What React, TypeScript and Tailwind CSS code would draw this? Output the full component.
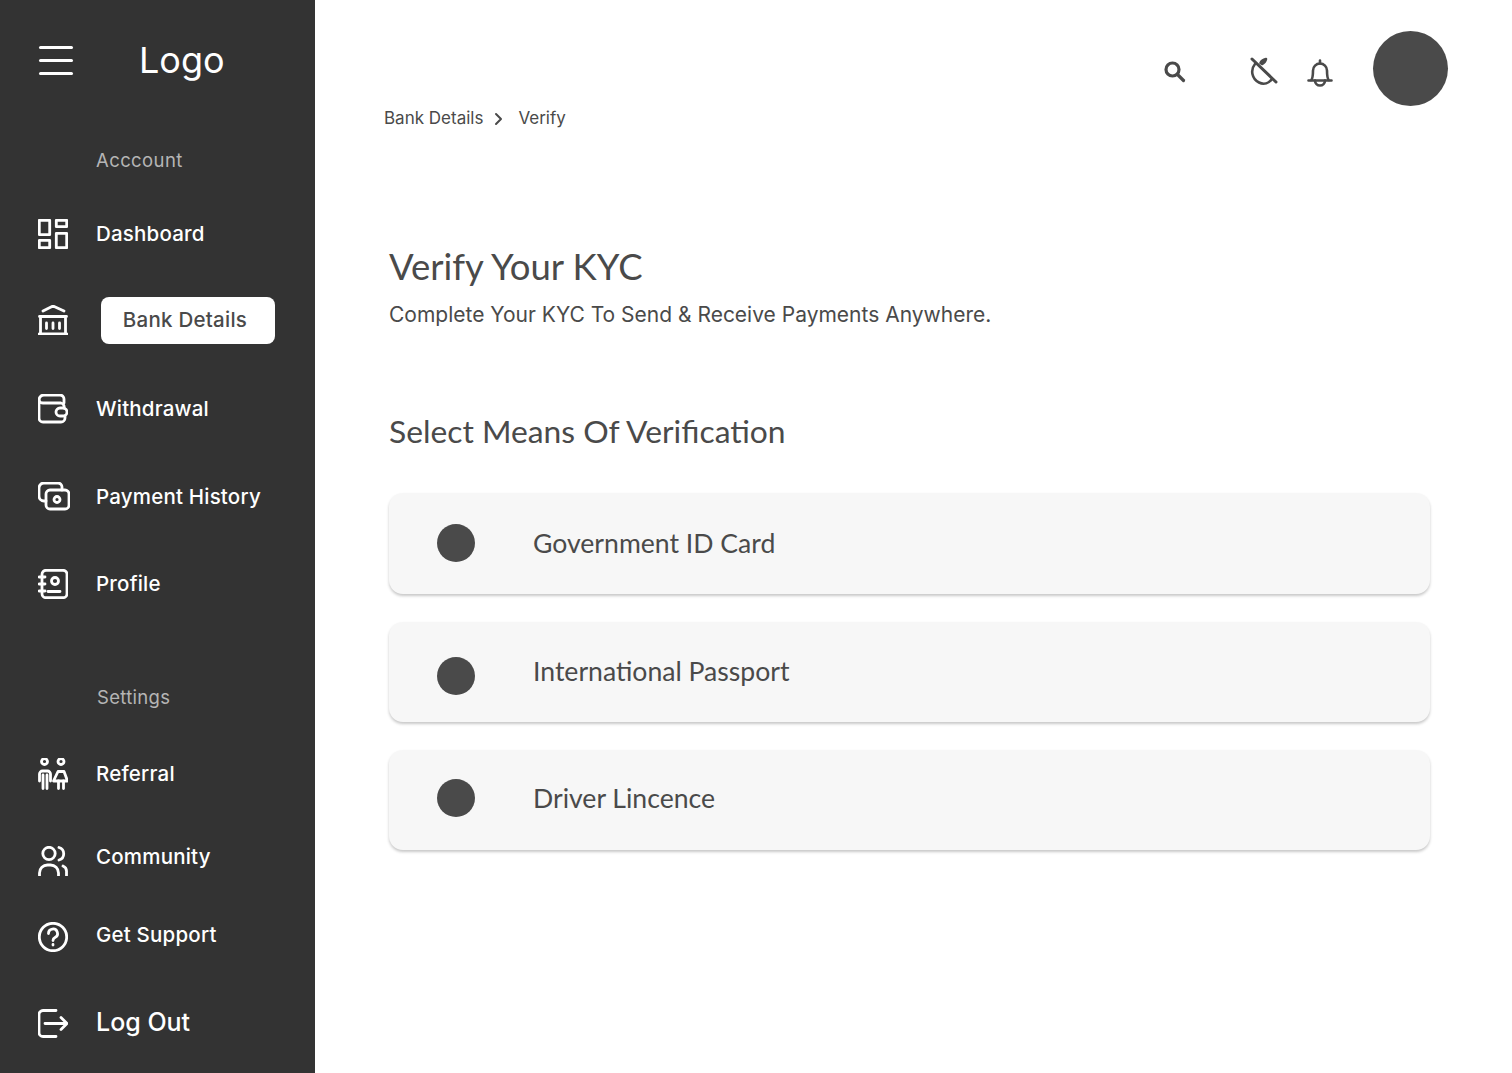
import React from "react";

const sans = "[font-family:Inter,sans-serif]";
const headFont = "[font-family:Lato,sans-serif]";

const icons: Record<string, React.ReactNode> = {
  dashboard: (
    <>
      <rect x="1.300" y="1.300" width="10.400" height="14.400" />
      <rect x="18.300" y="1.300" width="10.400" height="6.400" />
      <rect x="1.300" y="21.300" width="10.400" height="7.400" />
      <rect x="18.300" y="14.300" width="10.400" height="14.400" />
    </>
  ),
  bank: (
    <>
      <path d="M5 6l10-5 11 5" />
      <path d="M1.500 11.500h27M2.500 11.500V29M27.500 11.500V29M1 29h28" />
      <path d="M8.500 18v5.500M15 18v5.500M21.500 18v5.500" />
    </>
  ),
  wallet: (
    <>
      <path d="M26 9V5a4 4 0 0 0-4-4H6a5 5 0 0 0-5 5v18a4 4 0 0 0 4 4h18a4 4 0 0 0 4-4v-2" />
      <path d="M1 6c0 2 2 3 4 3h18a4 4 0 0 1 3 5" />
      <rect x="18" y="14" width="11" height="8" rx="4" />
    </>
  ),
  payment: (
    <>
      <path d="M24 8V5a4 4 0 0 0-4-4H6a5 5 0 0 0-5 5v8a5 5 0 0 0 5 5h2" />
      <rect x="8" y="8" width="23" height="19" rx="4" />
      <circle cx="19" cy="17.500" r="3" />
    </>
  ),
  profile: (
    <>
      <rect x="4" y="1.300" width="25" height="27.400" rx="4" />
      <path d="M1 8h6M1 15h6M1 22h6M10 22.500h12" />
      <circle cx="17" cy="12" r="3.500" />
    </>
  ),
  referral: (
    <>
      <circle cx="6.500" cy="3.500" r="3" />
      <circle cx="23" cy="3.500" r="3" />
      <path d="M1.500 23v-7a3 3 0 0 1 3-3h5a3 3 0 0 1 3 3v7" />
      <path d="M5 17v13.500M9 17v13.500" />
      <path d="M15.500 23l4.500-9.500h6l3.500 9.500z" />
      <path d="M20.500 23v7.500M25.500 23v7.500" />
    </>
  ),
  community: (
    <>
      <circle cx="11" cy="7.500" r="6.200" />
      <path d="M21 1.500a6.500 6.500 0 0 1 0 12.500" />
      <path d="M1.500 30v-3a8 8 0 0 1 8-8h3a8 8 0 0 1 8 8v3" />
      <path d="M25 20a6 6 0 0 1 3.500 6v4" />
    </>
  ),
  support: (
    <>
      <circle cx="15" cy="15" r="13.700" />
      <path d="M10.500 11.500a4.500 4.500 0 1 1 6.500 4c-1.500.8-2 1.500-2 3" />
      <path d="M15 22.500v.5" />
    </>
  ),
  logout: (
    <>
      <path d="M18 1.500H5a4 4 0 0 0-4 4v18a4 4 0 0 0 4 4h13" />
      <path d="M7 14.500h22M23 8.500l6 6-6 6" />
    </>
  ),
};

function NavIcon({ name, w = 30, h = 30 }: { name: string; w?: number; h?: number }) {
  return (
    <svg
      width={w}
      height={h}
      viewBox={`0 0 ${w} ${h}`}
      fill="none"
      stroke="white"
      strokeWidth="2.800"
      strokeLinecap="round"
      strokeLinejoin="round"
      className="shrink-0"
    >
      {icons[name]}
    </svg>
  );
}

function NavRow({
  icon,
  label,
  className,
  iconClass = "",
  h,
  w,
}: {
  icon: string;
  label: string;
  className: string;
  iconClass?: string;
  h?: number;
  w?: number;
}) {
  return (
    <div className={`flex items-center h-[40px] ${className}`}>
      <div className={`w-[58px] flex shrink-0 ${iconClass}`}>
        <NavIcon name={icon} h={h} w={w} />
      </div>
      <span className="text-[20.500px] font-[450] tracking-[0.2px] text-white">{label}</span>
    </div>
  );
}

function Sidebar() {
  return (
    <aside className={`w-[315px] shrink-0 h-screen bg-[#333333] pl-[38px] pt-[40px] flex flex-col ${sans}`}>
      <div className="flex items-center h-[40px]">
        <div className="w-[34px] flex flex-col gap-[10px] ml-[1px]">
          <div className="h-[3px] bg-white rounded-full" />
          <div className="h-[3px] bg-white rounded-full" />
          <div className="h-[3px] bg-white rounded-full" />
        </div>
        <span className="ml-[66px] text-[36px] text-white">Logo</span>
      </div>

      <div className="mt-[61px] h-[40px] flex items-center pl-[58px] text-[18.500px] text-[#b5b5b5] tracking-[0.4px]">
        Acccount
      </div>
      <NavRow icon="dashboard" label="Dashboard" className="mt-[33px]" />

      <div className="mt-[46px] h-[40px] flex items-center">
        <NavIcon name="bank" />
        <div className="ml-[33px] w-[174px] h-[47px] bg-white rounded-[8px] flex items-center justify-center pr-[6px] text-[20.500px] font-[450] tracking-[0.25px] text-[#4a4a4a] shrink-0">
          Bank Details
        </div>
      </div>

      <NavRow icon="wallet" label="Withdrawal" className="mt-[49px]" />
      <NavRow icon="payment" label="Payment History" className="mt-[48px]" w={32} />
      <NavRow icon="profile" label="Profile" className="mt-[47px]" />

      <div className="mt-[74px] h-[40px] flex items-center pl-[59px] text-[18.500px] text-[#b5b5b5] tracking-[0.3px]">
        Settings
      </div>
      <NavRow icon="referral" label="Referral" className="mt-[36px]" h={32} />
      <NavRow icon="community" label="Community" className="mt-[43px]" iconClass="mt-[8px]" />
      <NavRow icon="support" label="Get Support" className="mt-[38px]" iconClass="mt-[4px]" />
      <div className="mt-[48px] h-[40px] flex items-center">
        <div className="w-[58px] flex shrink-0 mt-[2px]">
          <NavIcon name="logout" />
        </div>
        <span className="text-[25px] text-white font-[450]">Log Out</span>
      </div>
    </aside>
  );
}

function TopBar() {
  return (
    <div className="flex items-start justify-end pt-[31px] pr-[64px] h-[106px]">
      <div className="flex items-center mt-[25px]">
        <svg width="24" height="24" viewBox="0 0 24 24" fill="none" stroke="#4a4a4a" strokeWidth="3.200" strokeLinecap="round" className="mr-[1px] mt-[-2px]">
          <circle cx="9.500" cy="9.500" r="6.500" />
          <path d="M14.500 14.500l6 6" />
        </svg>
        <svg width="28" height="28" viewBox="0 0 28 28" fill="none" stroke="#4a4a4a" strokeWidth="2.600" strokeLinecap="round" strokeLinejoin="round" className="ml-[62px] mt-[-4px]">
          <path d="M5 7C0 13 2 22 9 25.500c5 2.500 10 .5 13-3.500" />
          <path d="M2 2l24 23" strokeWidth="3" />
          <path d="M10.500 6c1-2.500 3-3.500 5.500-4-.5 2.500-2 4-4 5z" fill="#4a4a4a" />
        </svg>
        <svg width="26" height="30" viewBox="0 0 26 30" fill="none" stroke="#4a4a4a" strokeWidth="2.600" strokeLinecap="round" strokeLinejoin="round" className="ml-[29px] mt-[3px]">
          <path d="M1.500 21.500h23M4 21.500c2-2 2-5 2-10a7 7 0 0 1 14 0c0 5 0 8 2 10" />
          <path d="M13 1.500v3M8 21.500a5 5 0 0 0 10 0" />
        </svg>
      </div>
      <div className="w-[75px] h-[75px] rounded-full bg-[#4a4a4a] ml-[40px]" />
    </div>
  );
}

function OptionCard({
  label,
  className,
  dotClass,
  textClass = "",
}: {
  label: string;
  className: string;
  dotClass: string;
  textClass?: string;
}) {
  return (
    <div className={`bg-[#f7f7f7] rounded-[14px] shadow-[0_2px_3px_rgba(0,0,0,0.22)] flex items-center pl-[48px] ${className}`}>
      <div className={`w-[38px] h-[38px] rounded-full bg-[#4a4a4a] shrink-0 ${dotClass}`} />
      <span className={`ml-[58px] text-[26.600px] text-[#4a4a4a] ${headFont} ${textClass}`}>{label}</span>
    </div>
  );
}

export default function App() {
  return (
    <div className="flex h-screen overflow-hidden bg-white">
      <Sidebar />
      <main className="flex-1">
        <TopBar />
        <div className={`pl-[69px] mt-[3px] h-[20px] flex items-center text-[17px] text-[#4a4a4a] ${sans}`}>
          <span>Bank Details</span>
          <svg width="10" height="14" viewBox="0 0 10 14" fill="none" stroke="#4a4a4a" strokeWidth="2" strokeLinecap="round" strokeLinejoin="round" className="ml-[11px]">
            <path d="M2 2l5 5-5 5" />
          </svg>
          <span className="ml-[14px]">Verify</span>
        </div>

        <div className="pl-[74px] pr-[82px]">
          <h1 className={`mt-[115px] text-[36.500px] leading-[44px] text-[#4a4a4a] ${headFont}`}>Verify Your KYC</h1>
          <p className={`mt-[12px] text-[21px] leading-[30px] text-[#4a4a4a] ${sans}`}>
            Complete Your KYC To Send &amp; Receive Payments Anywhere.
          </p>
          <h2 className={`mt-[81px] text-[31.800px] leading-[40px] text-[#4a4a4a] ${headFont}`}>Select Means Of Verification</h2>
          <div className="mt-[42px]">
            <OptionCard label="Government ID Card" className="h-[101px]" dotClass="mt-[-1px]" />
            <OptionCard label="International Passport" className="h-[100px] mt-[28px]" dotClass="mt-[8px]" />
            <OptionCard label="Driver Lincence" className="h-[100px] mt-[28px]" dotClass="mt-[-4px]" textClass="mt-[-2px]" />
          </div>
        </div>
      </main>
    </div>
  );
}
